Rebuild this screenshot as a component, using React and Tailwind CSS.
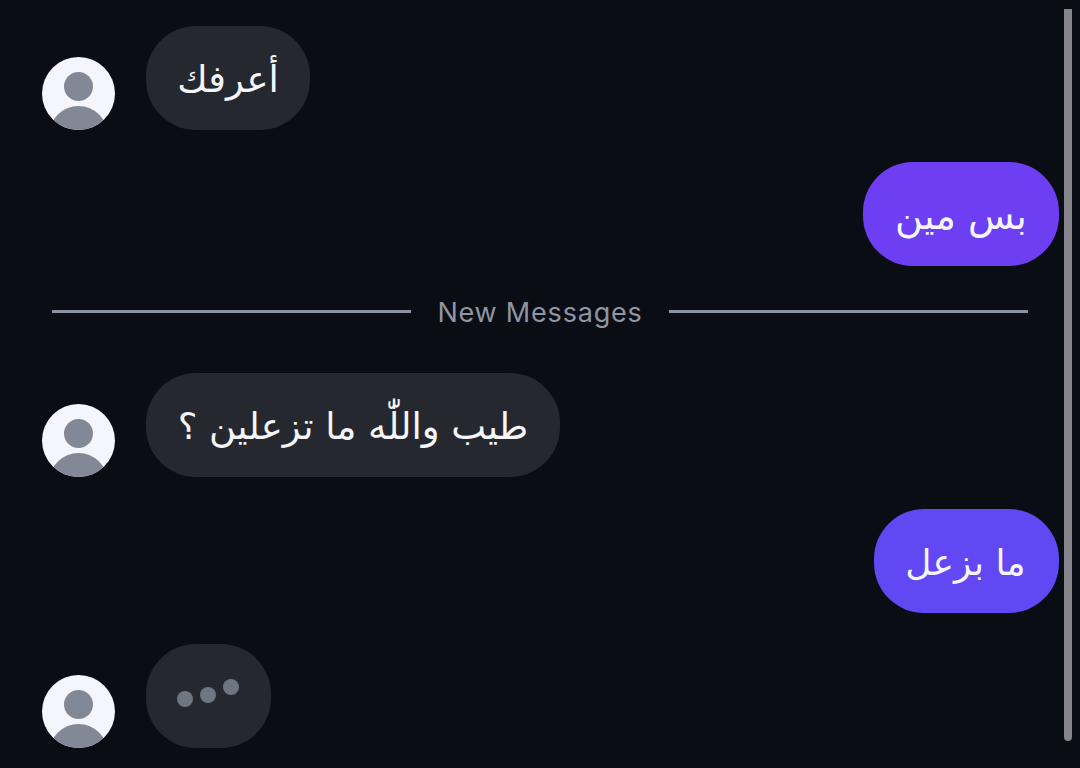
const messages = [
  { id: 1, from: 'them', text: 'أعرفك', bubble: 'w-[164px] bg-[#25282f]', size: 'text-[37px]' },
  { id: 2, from: 'me', text: 'بس مين', bubble: 'w-[196px] bg-[#6e3ef2]', size: 'text-[38px]' },
];

const newMessages = [
  { id: 3, from: 'them', text: 'طيب واللّٰه ما تزعلين ؟', bubble: 'w-[414px] bg-[#25282f]', size: 'text-[37px]' },
  { id: 4, from: 'me', text: 'ما بزعل', bubble: 'w-[185px] bg-[#6148f3]', size: 'text-[36px] pr-0.5' },
];

function Avatar() {
  return (
    <div className="relative size-[73px] shrink-0 overflow-hidden rounded-full bg-[#f5f5fe]">
      <div className="absolute left-[22px] top-[15px] size-[29px] rounded-full bg-[#838897]" />
      <div className="absolute left-[7px] top-[49px] size-[59px] rounded-full bg-[#838897]" />
    </div>
  );
}

function Message({ message }) {
  const mine = message.from === 'me';
  return (
    <div className={mine ? 'flex justify-end' : 'flex items-end gap-[31px] pl-[42px]'}>
      {!mine && <Avatar />}
      <div className={`flex h-[104px] items-center justify-center rounded-[50px] pt-[3px] ${message.bubble}`}>
        <span dir="rtl" className={`whitespace-nowrap leading-none text-[#f5f5fa] ${message.size}`}>
          {message.text}
        </span>
      </div>
    </div>
  );
}

function Divider() {
  return (
    <div className="flex h-[43px] items-center pl-[52px] pr-[31px]">
      <div className="h-[3px] flex-1 bg-[#8b93a3]" />
      <span className="w-[258px] pt-0.5 text-center font-['Inter',sans-serif] text-[27px] leading-none tracking-[0.8px] text-[#8f95a3]">
        New Messages
      </span>
      <div className="h-[3px] flex-1 bg-[#8b93a3]" />
    </div>
  );
}

function Typing() {
  return (
    <div className="flex items-end gap-[31px] pl-[42px]">
      <Avatar />
      <div className="flex h-[104px] w-[125px] items-start justify-center gap-[7px] rounded-[50px] bg-[#25282f] pr-px">
        <span className="mt-[47px] size-4 rounded-full bg-[#6f7682]" />
        <span className="mt-[43px] size-4 rounded-full bg-[#6f7682]" />
        <span className="mt-[35px] size-4 rounded-full bg-[#6f7682]" />
      </div>
    </div>
  );
}

export default function App() {
  return (
    <div className="flex h-[768px] w-[1080px] overflow-hidden bg-[#0a0d14] font-['DejaVu_Sans',sans-serif]">
      <div className="flex w-[1059px] flex-col pt-[26px]">
        <div className="flex flex-col gap-8">
          {messages.map((m) => <Message key={m.id} message={m} />)}
        </div>
        <div className="pt-[24px] pb-[40px]">
          <Divider />
        </div>
        <div className="flex flex-col gap-8">
          {newMessages.map((m) => <Message key={m.id} message={m} />)}
        </div>
        <div className="mt-[31px]">
          <Typing />
        </div>
      </div>
      <div className="ml-[5px] mt-[9px] h-[732px] w-2 rounded-b-full bg-[#85858b]" />
    </div>
  );
}
